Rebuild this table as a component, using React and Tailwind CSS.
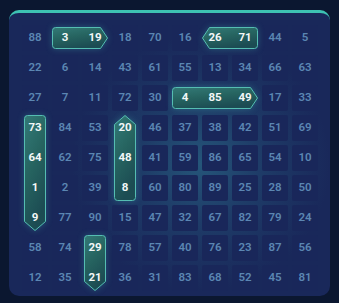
import { useId } from 'react';

const SHIPS = [
  { nums: [3, 19], dir: 'right', cls: 'col-start-2 row-start-1 col-span-2' },
  { nums: [26, 71], dir: 'left', cls: 'col-start-7 row-start-1 col-span-2' },
  { nums: [4, 85, 49], dir: 'right', cls: 'col-start-6 row-start-3 col-span-3' },
  { nums: [73, 64, 1, 9], dir: 'down', cls: 'col-start-1 row-start-4 row-span-4' },
  { nums: [20, 48, 8], dir: 'up', cls: 'col-start-4 row-start-4 row-span-3' },
  { nums: [29, 21], dir: 'down', cls: 'col-start-3 row-start-8 row-span-2' },
];

// cells not covered by a ship, in row order
const CELLS = [
  88, 18, 70, 16, 44, 5,
  22, 6, 14, 43, 61, 55, 13, 34, 66, 63,
  27, 7, 11, 72, 30, 17, 33,
  84, 53, 46, 37, 38, 42, 51, 69,
  62, 75, 41, 59, 86, 65, 54, 10,
  2, 39, 60, 80, 89, 25, 28, 50,
  77, 90, 15, 47, 32, 67, 82, 79, 24,
  58, 74, 78, 57, 40, 76, 23, 87, 56,
  12, 35, 36, 31, 83, 68, 52, 45, 81,
];

function shipPath(dir, n) {
  const L = n * 30 - 4;
  const T = 26;
  const b0 = 2.5;
  const b1 = T - 2.5;
  const a0 = 0.5;
  const a1 = L - 0.5;
  const vertical = dir === 'up' || dir === 'down';
  const p = vertical ? 9 : 7;
  const r = 3;
  const map = (a, b) => {
    if (dir === 'right') return [a, b];
    if (dir === 'left') return [L - a, b];
    if (dir === 'down') return [b, a];
    return [b, L - a];
  };
  const pt = (a, b) => map(a, b).join(',');
  return [
    `M${pt(a0 + r, b0)}`,
    `L${pt(a1 - p, b0)}`,
    `L${pt(a1, T / 2)}`,
    `L${pt(a1 - p, b1)}`,
    `L${pt(a0 + r, b1)}`,
    `Q${pt(a0, b1)} ${pt(a0, b1 - r)}`,
    `L${pt(a0, b0 + r)}`,
    `Q${pt(a0, b0)} ${pt(a0 + r, b0)}`,
    'Z',
  ].join(' ');
}

function Ship({ nums, dir, cls }) {
  const id = useId().replace(/:/g, '');
  const vertical = dir === 'up' || dir === 'down';
  return (
    <div className={`relative ${cls}`}>
      <svg
        className="absolute inset-0 h-full w-full [filter:drop-shadow(0_0_3px_rgba(70,190,180,0.3))]"
        aria-hidden="true"
      >
        <defs>
          <linearGradient id={`g${id}`} x1="0" y1="0" x2="0.4" y2="1">
            <stop offset="0" stopColor="#337a77" />
            <stop offset="0.5" stopColor="#266460" />
            <stop offset="1" stopColor="#1c4c53" />
          </linearGradient>
        </defs>
        <path d={shipPath(dir, nums.length)} fill={`url(#g${id})`} stroke="#55bdb2" strokeWidth="1" />
      </svg>
      <div className={`relative flex gap-1 ${vertical ? 'flex-col' : ''}`}>
        {nums.map((v) => (
          <div key={v} className="flex h-[26px] w-[26px] items-center justify-center text-[11.5px] font-bold text-[#f2f7f7]">
            {v}
          </div>
        ))}
      </div>
    </div>
  );
}

export default function App() {
  return (
    <div className="h-[303px] w-[339px] bg-[#0b1730] pt-[10px] pl-[9px] font-['Roboto','Liberation_Sans',sans-serif]">
      <div className="h-[286px] w-[321px] rounded-[10px] border-t-[3px] border-[#3dc2b3] bg-[#19285a] pt-[12px] pl-[13px]">
        <div className="grid grid-cols-[repeat(10,26px)] grid-rows-[repeat(9,26px)] gap-1 bg-[radial-gradient(ellipse_42%_48%_at_58%_52%,rgba(42,105,135,0.7)_0%,rgba(38,90,125,0.4)_45%,rgba(25,40,90,0)_100%)]">
          {SHIPS.map((s, i) => (
            <Ship key={i} {...s} />
          ))}
          {CELLS.map((v, i) => (
            <div
              key={i}
              className="flex items-center justify-center rounded-[2px] bg-[#19275a] text-[11.5px] font-semibold text-[#5b86b2]"
            >
              {v}
            </div>
          ))}
        </div>
      </div>
    </div>
  );
}
